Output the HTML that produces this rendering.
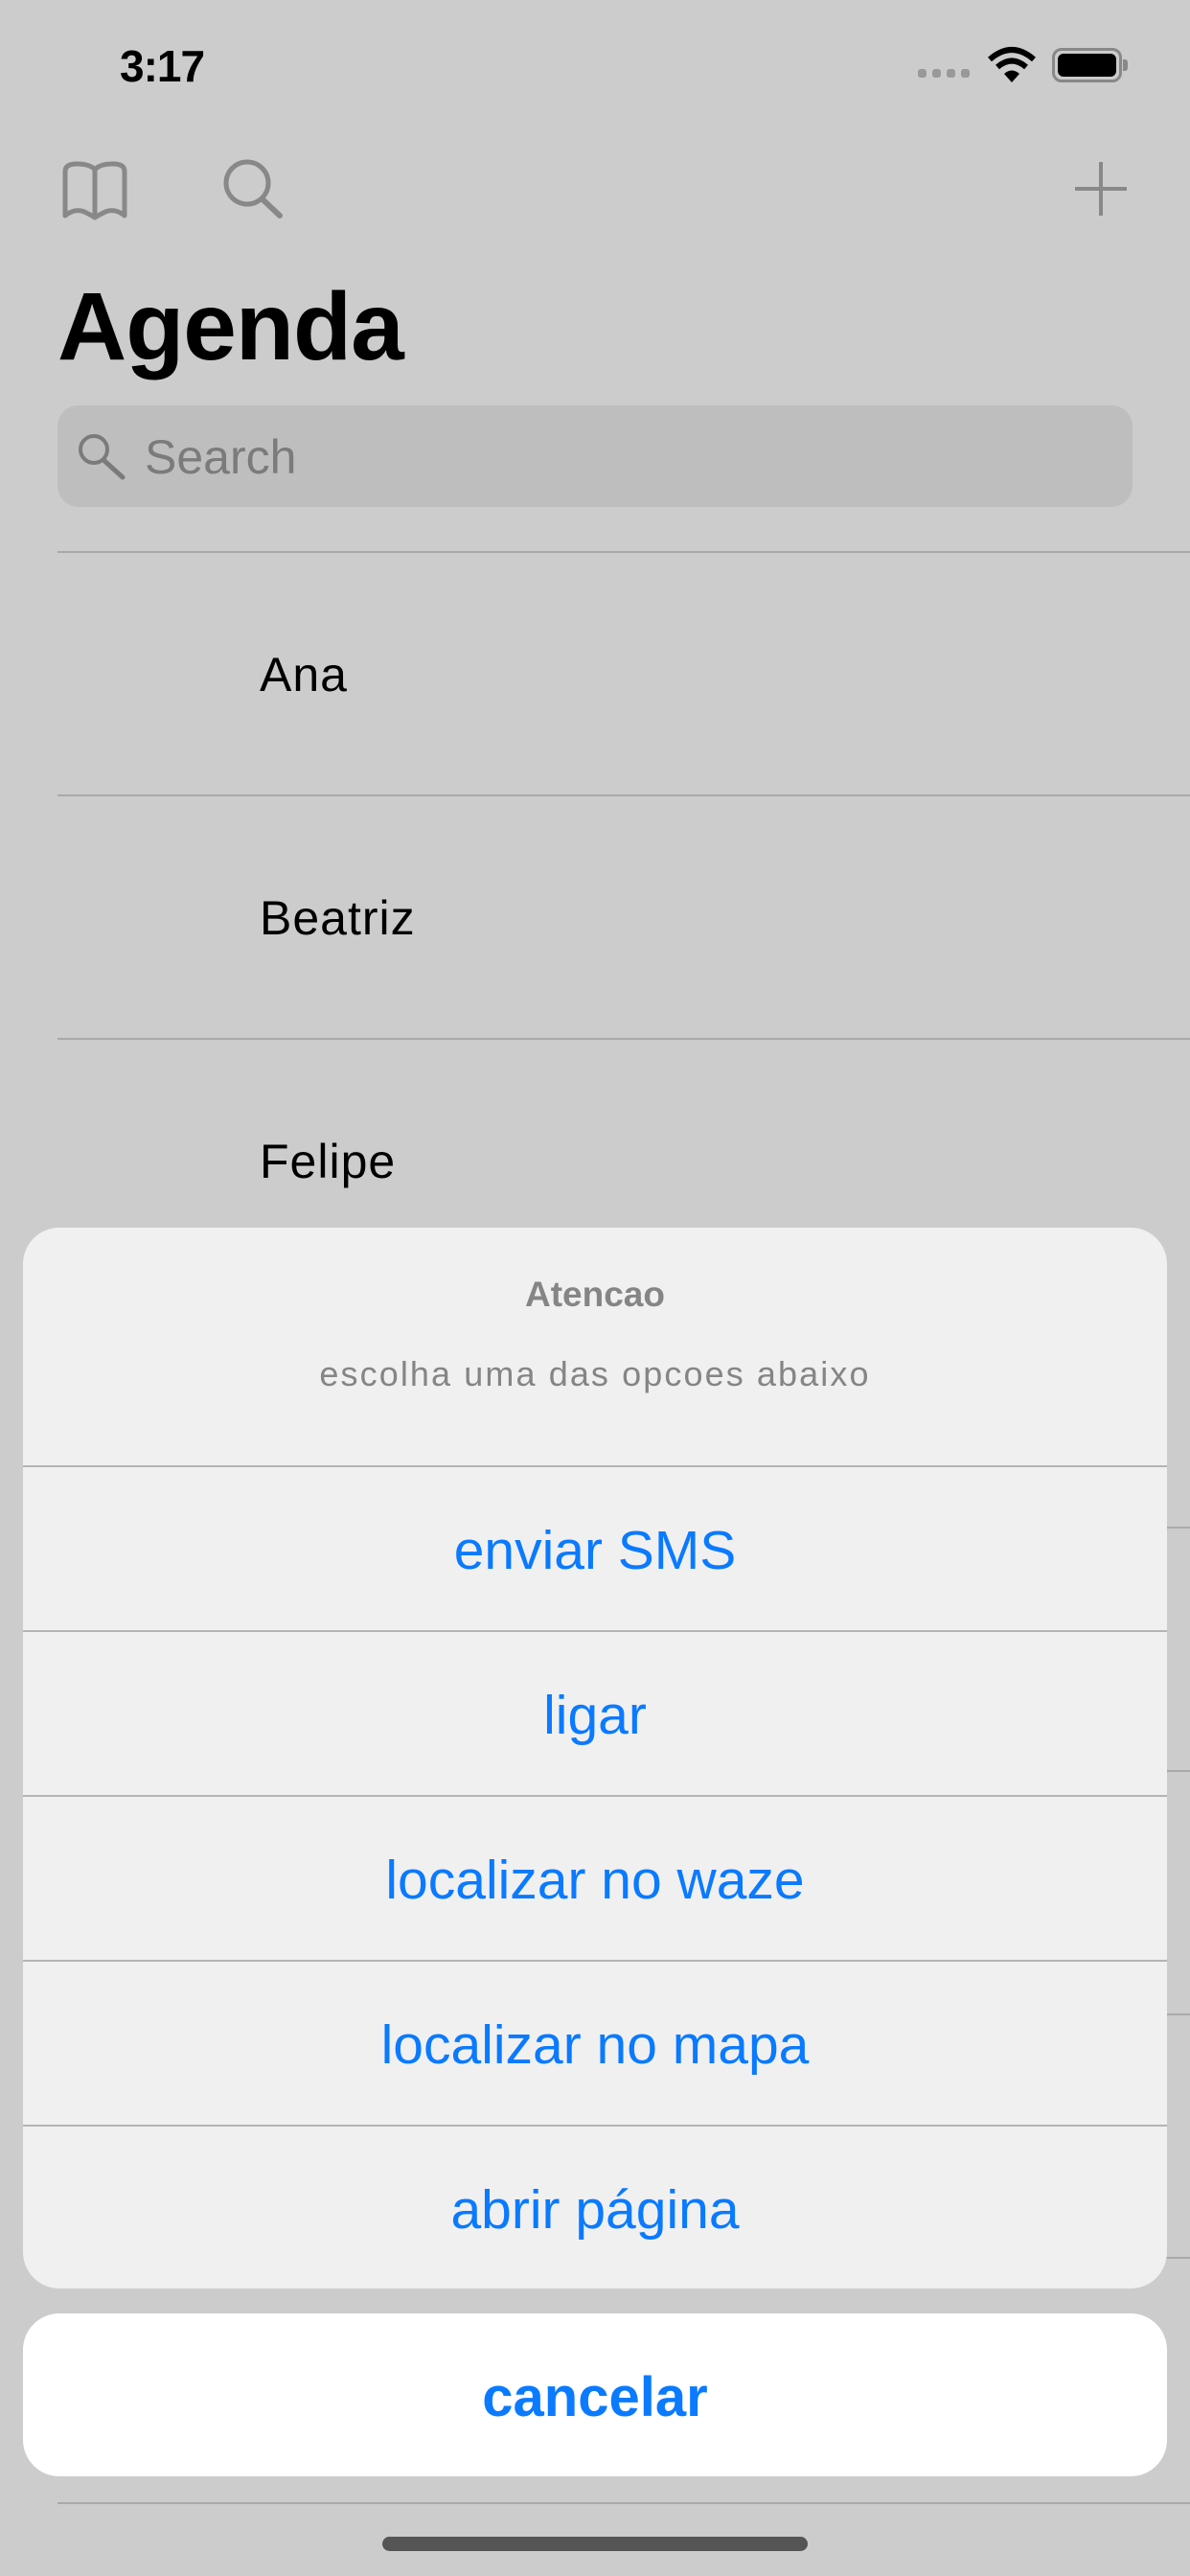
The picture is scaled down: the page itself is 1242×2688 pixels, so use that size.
<!DOCTYPE html>
<html><head><meta charset="utf-8"><style>
*{margin:0;padding:0;box-sizing:border-box}
body{width:1242px;height:2688px;background:#cccccc;position:relative;overflow:hidden;font-family:"Liberation Sans",sans-serif}
.a{position:absolute}
.sep{position:absolute;left:60px;right:0;height:2px;background:#a9a9a9}
.name{position:absolute;left:271px;font-size:50px;color:#000;letter-spacing:1px}
.btn{position:absolute;left:0;right:0;height:171px;display:flex;align-items:center;justify-content:center;color:#0a7aff;font-size:57px}
.bsep{position:absolute;left:0;right:0;height:2px;background:#b4b4b4}
</style></head><body>
<div class="a" style="left:125px;top:42px;font-size:46px;font-weight:bold;letter-spacing:-1px;color:#000">3:17</div>
<div class="a" style="left:958px;top:72px;width:9px;height:9px;border-radius:3px;background:#999"></div>
<div class="a" style="left:973px;top:72px;width:9px;height:9px;border-radius:3px;background:#999"></div>
<div class="a" style="left:988px;top:72px;width:9px;height:9px;border-radius:3px;background:#999"></div>
<div class="a" style="left:1003px;top:72px;width:9px;height:9px;border-radius:3px;background:#999"></div>
<svg class="a" style="left:1030px;top:48px" width="52" height="40" viewBox="0 0 52 40"><path d="M3 14 Q26 -6 49 14" stroke="#000" stroke-width="6" fill="none"/><path d="M11 22 Q26 9 41 22" stroke="#000" stroke-width="6" fill="none"/><path d="M18 29 Q26 22 34 29 L26 38 Z" fill="#000"/></svg>
<div class="a" style="left:1098px;top:50px;width:73px;height:36px;border:3px solid #888;border-radius:10px;padding:3px"><div style="width:100%;height:100%;background:#000;border-radius:6px"></div></div>
<div class="a" style="left:1172px;top:62px;width:5px;height:12px;background:#888;border-radius:0 3px 3px 0"></div>

<svg class="a" style="left:60px;top:165px" width="80" height="70" viewBox="0 0 80 70"><path d="M8 60 V14 Q8 6 20 6 Q34 6 39 12 Q44 6 58 6 Q70 6 70 14 V60 Q60 52 50 56 Q42 60 39 62 Q36 60 28 56 Q18 52 8 60 Z M39 12 V62" stroke="#888" stroke-width="5" fill="none" stroke-linejoin="round"/></svg>
<svg class="a" style="left:225px;top:160px" width="80" height="80" viewBox="0 0 80 80"><circle cx="33" cy="31" r="22" stroke="#888" stroke-width="5" fill="none"/><path d="M49 48 L67 65" stroke="#888" stroke-width="6" stroke-linecap="round"/></svg>
<svg class="a" style="left:1118px;top:165px" width="62" height="64" viewBox="0 0 62 64"><path d="M31 4 V60 M4 32 H58" stroke="#888" stroke-width="4"/></svg>

<div class="a" style="left:60px;top:284px;font-size:100px;font-weight:bold;color:#000;letter-spacing:-1px">Agenda</div>
<div class="a" style="left:60px;top:423px;width:1122px;height:106px;border-radius:22px;background:#bebebe"></div>
<svg class="a" style="left:80px;top:450px" width="56" height="56" viewBox="0 0 56 56"><circle cx="18" cy="19" r="14" stroke="#7b7b7b" stroke-width="4" fill="none"/><path d="M28 30 L48 48" stroke="#7b7b7b" stroke-width="5" stroke-linecap="round"/></svg>
<div class="a" style="left:151px;top:448px;font-size:50px;color:#7b7b7b">Search</div>

<div class="sep" style="top:575px"></div>
<div class="name" style="top:675px">Ana</div>
<div class="sep" style="top:829px"></div>
<div class="name" style="top:929px">Beatriz</div>
<div class="sep" style="top:1083px"></div>
<div class="name" style="top:1183px">Felipe</div>
<div class="sep" style="top:1593px"></div>
<div class="sep" style="top:1847px"></div>
<div class="sep" style="top:2101px"></div>
<div class="sep" style="top:2355px"></div>
<div class="sep" style="top:2611px"></div>

<div class="a" style="left:24px;top:1281px;width:1194px;height:1107px;border-radius:38px;background:#f0f0f0;overflow:hidden">
 <div class="a" style="left:0;right:0;top:49px;text-align:center;font-size:37px;font-weight:bold;color:#858585">Atencao</div>
 <div class="a" style="left:0;right:0;top:132px;text-align:center;font-size:36px;color:#858585;letter-spacing:2.1px">escolha uma das opcoes abaixo</div>
 <div class="bsep" style="top:248px"></div>
 <div class="btn" style="top:251px">enviar SMS</div>
 <div class="bsep" style="top:420px"></div>
 <div class="btn" style="top:423px">ligar</div>
 <div class="bsep" style="top:592px"></div>
 <div class="btn" style="top:595px">localizar no waze</div>
 <div class="bsep" style="top:764px"></div>
 <div class="btn" style="top:767px">localizar no mapa</div>
 <div class="bsep" style="top:936px"></div>
 <div class="btn" style="top:939px">abrir página</div>
</div>
<div class="a" style="left:24px;top:2414px;width:1194px;height:170px;border-radius:38px;background:#fff;display:flex;align-items:center;justify-content:center;color:#0a7aff;font-size:58px;font-weight:bold;padding-top:4px">cancelar</div>
<div class="a" style="left:399px;top:2647px;width:444px;height:15px;border-radius:8px;background:#555"></div>
</body></html>
